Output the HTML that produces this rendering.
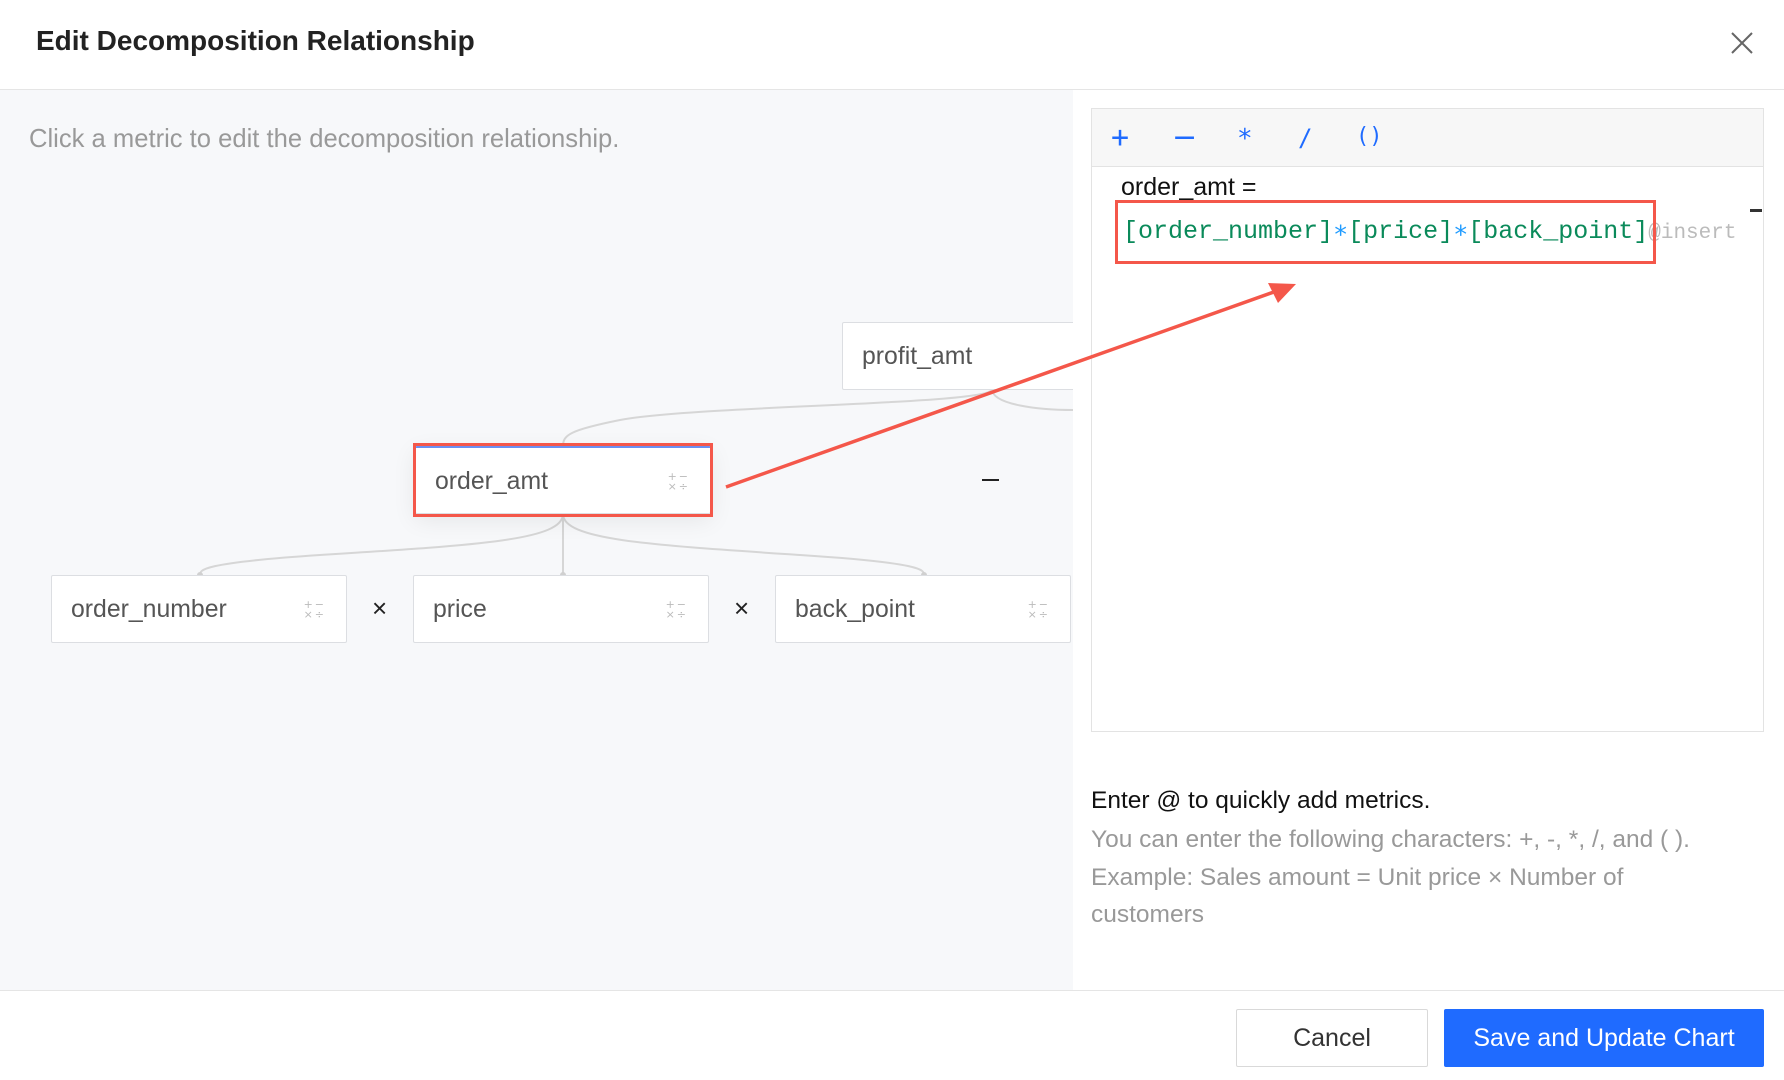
<!DOCTYPE html>
<html><head><meta charset="utf-8"><style>
*{margin:0;padding:0;box-sizing:border-box}
body{width:1784px;height:1080px;position:relative;overflow:hidden;background:#fff;font-family:"Liberation Sans",Arial,sans-serif}
.a{position:absolute;white-space:nowrap}
.node{position:absolute;background:#fff;border:1px solid #dcdee2;border-radius:2px;height:68px;color:#555;font-size:24.8px;line-height:68px;padding-left:19px}
.ic{position:absolute;right:20px;top:24px;font-size:11px;line-height:10px;color:#bbb;letter-spacing:2px;font-family:"DejaVu Sans",sans-serif}
</style></head><body>
<div class="a" style="left:36px;top:25px;font-size:28px;font-weight:bold;color:#222">Edit Decomposition Relationship</div>
<svg class="a" style="left:1731px;top:32px" width="22" height="22"><path d="M1 1L21 21M21 1L1 21" stroke="#666" stroke-width="2"/></svg>
<div class="a" style="left:0;top:89px;width:1784px;height:1px;background:#e5e5e5"></div>
<div class="a" style="left:0;top:90px;width:1073px;height:900px;background:#f7f8fa;overflow:hidden">
<div class="a" style="left:29px;top:35px;font-size:25.6px;color:#999">Click a metric to edit the decomposition relationship.</div>
<svg class="a" style="left:0;top:-90px" width="1073" height="900">
<g fill="none" stroke="#d6d6d6" stroke-width="2">
<path d="M992 389 C992 405 700 405 620 420 C570 430 563 435 563 446"/>
<path d="M992 389 C992 405 1040 410 1073 410"/>
<path d="M563 514 C563 540 480 545 320 555 C200 563 200 570 200 575"/>
<path d="M563 514 L563 575"/>
<path d="M563 514 C563 540 650 545 800 555 C924 563 924 570 924 575"/>
</g>
<g fill="#d0d0d0"><circle cx="200" cy="575" r="3"/><circle cx="563" cy="575" r="3"/><circle cx="924" cy="575" r="3"/></g>
</svg>
<div class="node" style="left:842px;top:232px;width:260px">profit_amt</div>
<div class="node" style="left:415px;top:356px;width:296px;border-top:2px solid #6b8ff2;box-shadow:0 6px 24px rgba(0,0,0,.08)">order_amt<div class="ic">+−<br>×÷</div></div>
<div class="a" style="left:413px;top:353px;width:300px;height:74px;border:3px solid #f4574a"></div>
<div class="node" style="left:51px;top:485px;width:296px">order_number<div class="ic">+−<br>×÷</div></div>
<div class="node" style="left:413px;top:485px;width:296px">price<div class="ic">+−<br>×÷</div></div>
<div class="node" style="left:775px;top:485px;width:296px">back_point<div class="ic">+−<br>×÷</div></div>
<div class="a" style="left:372px;top:503px;font-size:26px;color:#222">×</div>
<div class="a" style="left:734px;top:503px;font-size:26px;color:#222">×</div>
<div class="a" style="left:982px;top:389px;width:17px;height:2px;background:#222"></div>
</div>
<div class="a" style="left:1091px;top:108px;width:673px;height:624px;border:1px solid #e3e3e3;background:#fff"></div>
<div class="a" style="left:1092px;top:109px;width:671px;height:58px;background:#f7f7f7;border-bottom:1px solid #e3e3e3"></div>
<div class="a" style="left:1111px;top:120px;font-size:30px;color:#1f6bff;font-family:'DejaVu Sans Mono',monospace">+</div>
<div class="a" style="left:1172px;top:120px;font-size:30px;color:#1f6bff;font-family:'DejaVu Sans',sans-serif">−</div>
<div class="a" style="left:1237px;top:124px;font-size:26px;color:#1f6bff;font-family:'DejaVu Sans Mono',monospace">*</div>
<div class="a" style="left:1298px;top:124px;font-size:24px;color:#1f6bff;font-family:'DejaVu Sans Mono',monospace">/</div>
<div class="a" style="left:1356px;top:124px;font-size:22px;color:#1f6bff;font-family:'DejaVu Sans Mono',monospace">()</div>
<div class="a" style="left:1121px;top:173px;font-size:25px;color:#111">order_amt =</div>
<div class="a" style="left:1123px;top:215px;font-size:25px;color:#0a8a5a;font-family:'Liberation Mono',monospace">[order_number]<span style="color:#1f9bff;font-family:'DejaVu Sans Mono',monospace">∗</span>[price]<span style="color:#1f9bff;font-family:'DejaVu Sans Mono',monospace">∗</span>[back_point]<span style="color:#bbb;font-size:21px">@insert</span></div>
<div class="a" style="left:1115px;top:200px;width:541px;height:64px;border:3px solid #f4574a"></div>
<div class="a" style="left:1750px;top:209px;width:12px;height:3px;background:#333"></div>
<svg class="a" style="left:0;top:0" width="1784" height="1080"><path d="M726 487 L1285 288" stroke="#f4574a" stroke-width="3.5" fill="none"/><path d="M1296 284 L1268 283 L1278 303 Z" fill="#f4574a"/></svg>
<div class="a" style="left:1091px;top:787px;font-size:24.5px;color:#111">Enter @ to quickly add metrics.</div>
<div class="a" style="left:1091px;top:821px;font-size:24.5px;color:#999;line-height:37.5px;white-space:normal;width:660px">You can enter the following characters: +, -, *, /, and ( ).<br>Example: Sales amount = Unit price × Number of<br>customers</div>
<div class="a" style="left:0;top:990px;width:1784px;height:1px;background:#e5e5e5"></div>
<div class="a" style="left:1236px;top:1009px;width:192px;height:58px;border:1px solid #d9d9d9;border-radius:2px;font-size:25px;color:#333;text-align:center;line-height:56px">Cancel</div>
<div class="a" style="left:1444px;top:1009px;width:320px;height:58px;background:#1f6bff;border-radius:2px;font-size:25px;color:#fff;text-align:center;line-height:58px">Save and Update Chart</div>
</body></html>
